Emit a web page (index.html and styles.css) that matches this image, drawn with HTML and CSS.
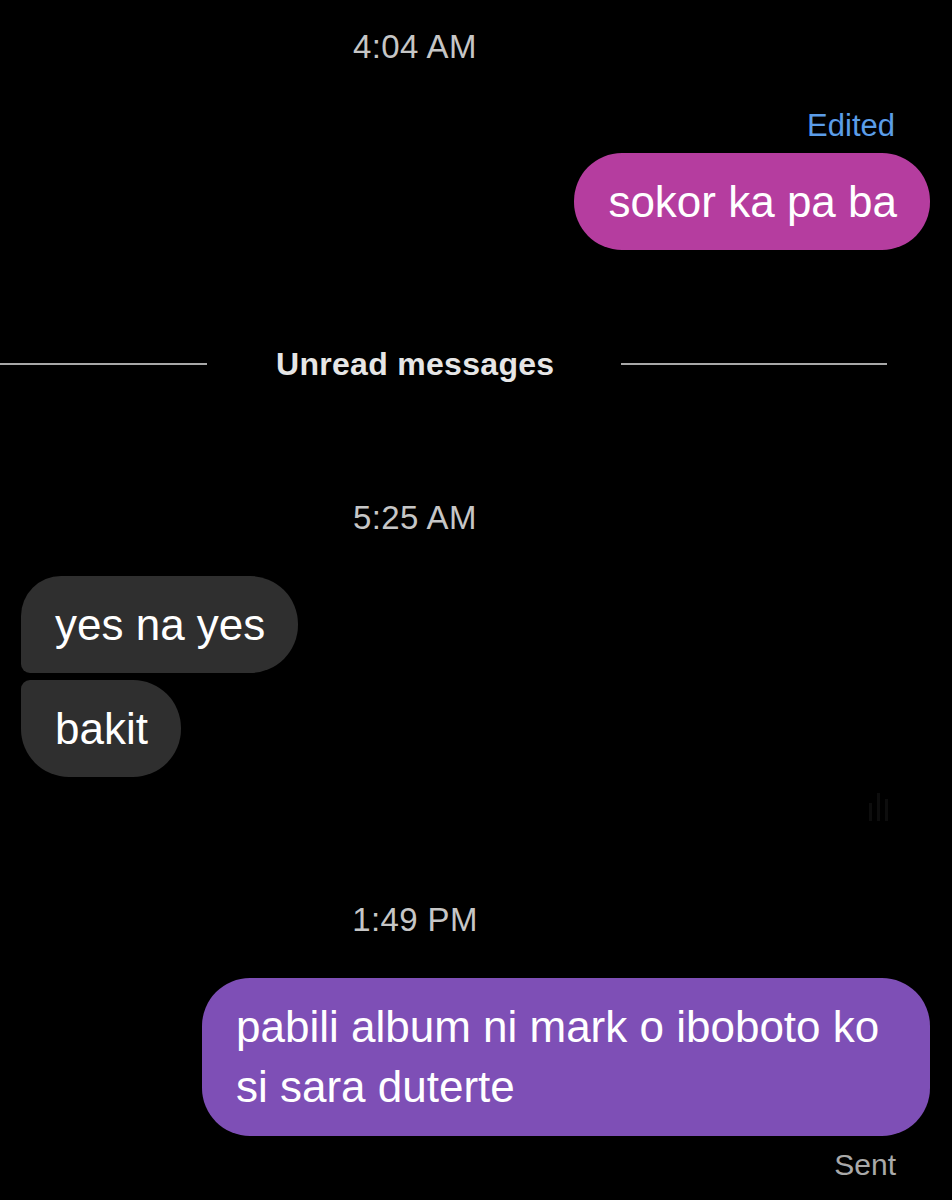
FILE: index.html
```html
<!DOCTYPE html>
<html lang="tl">
<head>
<meta charset="utf-8">
<title>Chat</title>
<link rel="stylesheet" href="styles.css">
</head>
<body>
<main class="chat">
  <div class="stamp stamp-first">4:04 AM</div>
  <div class="meta meta-edited">Edited</div>
  <div class="row row-out">
    <div class="bubble bubble-pink">sokor ka pa ba</div>
  </div>

  <div class="divider">
    <span class="divider-line divider-left"></span>
    <span class="divider-text">Unread messages</span>
    <span class="divider-line divider-right"></span>
  </div>

  <div class="stamp stamp-second">5:25 AM</div>
  <div class="row row-in">
    <div class="bubble bubble-gray bubble-first">yes na yes</div>
  </div>
  <div class="row row-in row-tight">
    <div class="bubble bubble-gray bubble-last">bakit</div>
  </div>
  <div class="row row-seen">
    <svg class="seen-icon" width="30" height="40" viewBox="0 0 30 40" aria-hidden="true">
      <rect x="4" y="18" width="3" height="18" fill="#0d0d0d"/>
      <rect x="12" y="8" width="3" height="28" fill="#0d0d0d"/>
      <rect x="20" y="14" width="3" height="22" fill="#0d0d0d"/>
    </svg>
  </div>

  <div class="stamp stamp-third">1:49 PM</div>
  <div class="row row-out">
    <div class="bubble bubble-purple">pabili album ni mark o iboboto ko si sara duterte</div>
  </div>
  <div class="meta meta-sent">Sent</div>
</main>
</body>
</html>
```

FILE: styles.css
```css
html, body {
  margin: 0;
  padding: 0;
  background: #000;
}

body {
  width: 952px;
  height: 1200px;
  overflow: hidden;
  font-family: "Liberation Sans", Arial, sans-serif;
  color: #fff;
}

.chat {
  display: flex;
  flex-direction: column;
}

.stamp {
  height: 40px;
  line-height: 40px;
  font-size: 33px;
  letter-spacing: 0.4px;
  color: #c6c6c6;
  text-align: center;
  padding-right: 122px;
}

.stamp-first { margin-top: 27px; }
.stamp-second { margin-top: 114px; }
.stamp-third { margin-top: 75px; }

.meta {
  height: 36px;
  line-height: 36px;
  text-align: right;
  padding-right: 57px;
}

.meta-edited {
  margin-top: 41px;
  font-size: 31px;
  color: #5b9de8;
}

.meta-sent {
  margin-top: 11px;
  font-size: 30px;
  color: #a9a9a9;
  padding-right: 56px;
}

.row {
  display: flex;
  padding: 0 22px 0 21px;
}

.row-out { justify-content: flex-end; }
.row-in { justify-content: flex-start; }

.bubble {
  font-size: 44px;
  line-height: 60px;
  padding: 19px 33px 18px 34px;
  border-radius: 48px;
  color: #fff;
}

.meta-edited + .row-out { margin-top: 9px; }
.stamp-second + .row-in { margin-top: 38px; }
.stamp-third + .row-out { margin-top: 38px; }

.row-tight { margin-top: 7px; }

.bubble-pink {
  background: #b53d9f;
}

.bubble-gray {
  background: #2f2f2f;
}

.bubble-first {
  border-radius: 40px 48px 48px 9px;
}

.bubble-last {
  border-radius: 9px 48px 48px 48px;
}

.bubble-purple {
  background: #7e4fb6;
  max-width: 661px;
  padding-bottom: 19px;
}

.row-seen {
  justify-content: flex-end;
  padding-right: 57px;
  margin-top: 8px;
  height: 40px;
}

.divider {
  display: flex;
  align-items: center;
  height: 40px;
  margin-top: 94px;
  padding-right: 65px;
}

.divider-line {
  height: 2px;
  background: #a8a8a8;
}

.divider-left {
  width: 207px;
  flex: none;
}

.divider-right {
  flex: 1;
}

.divider-text {
  font-size: 32px;
  font-weight: 600;
  color: #e6e6e6;
  padding: 0 67px 0 69px;
  letter-spacing: 0.3px;
}
```
